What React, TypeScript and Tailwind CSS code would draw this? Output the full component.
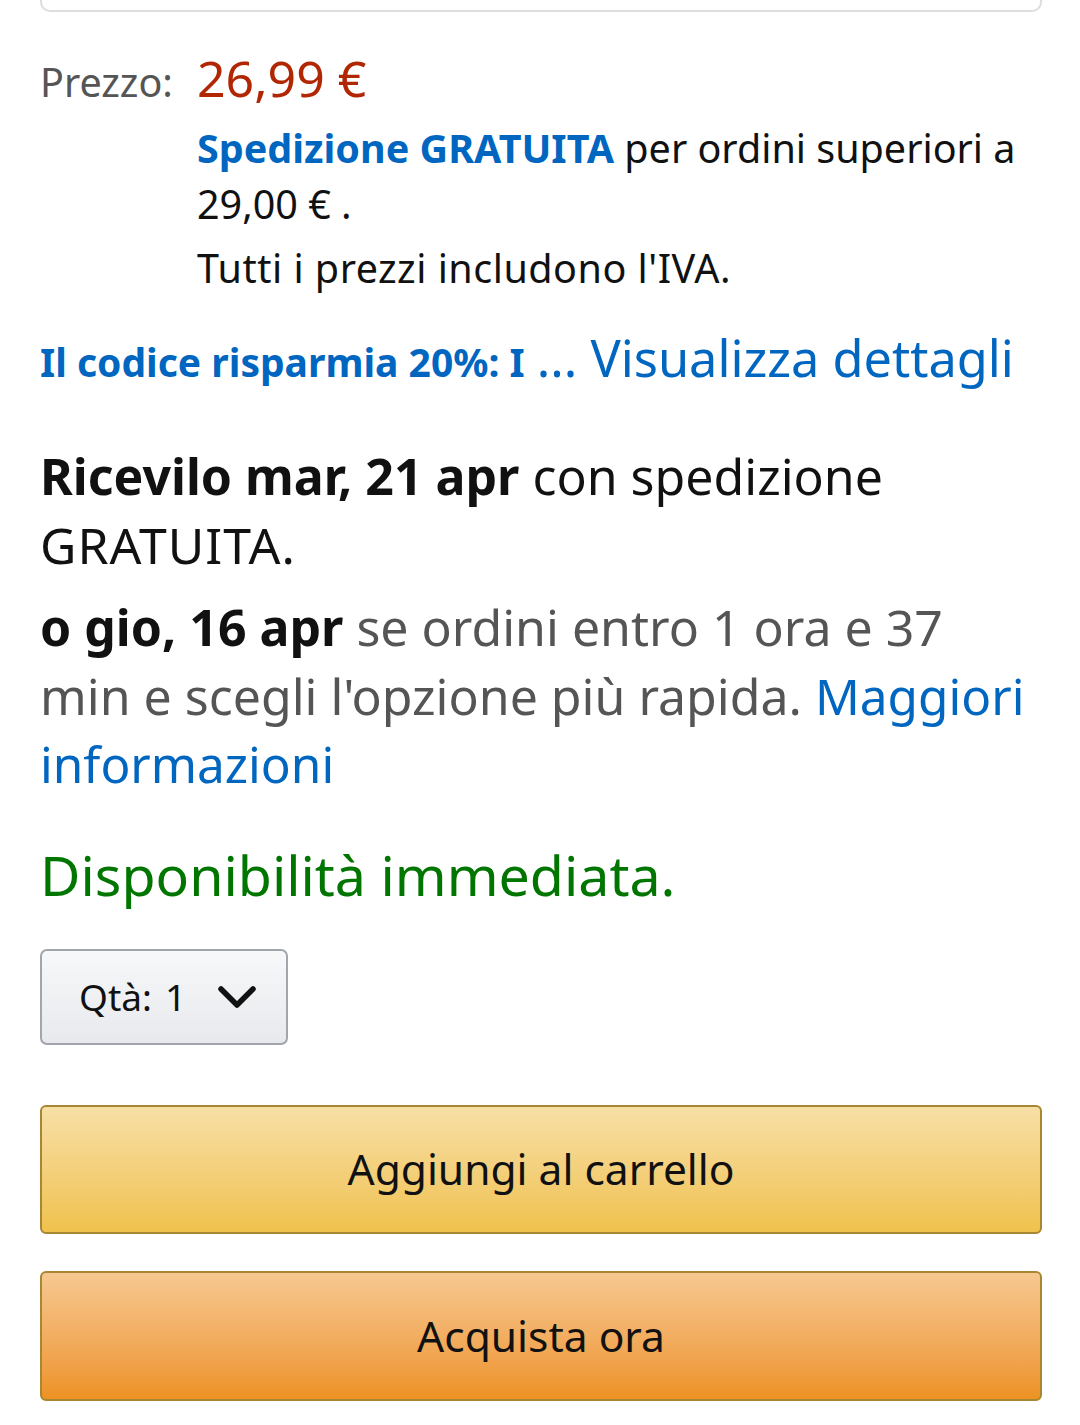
export default function App() {
  return (
    <div
      className="w-[1080px] min-h-[1425px] bg-white overflow-hidden relative"
      style={{ fontFamily: '"Noto Sans", "Open Sans", sans-serif' }}
    >
      <div className="ml-[40px] mr-[38px] -mt-[40px] h-[52px] rounded-b-[10px] border-2 border-t-0 border-[#dddddd]" />

      <div className="pl-[40px] pr-[38px]">
        <div className="flex items-baseline mt-[38px]">
          <span className="w-[157px] text-[39.5px] text-[#555555]">Prezzo:</span>
          <span className="text-[50px] leading-[56px] text-[#B12704]">26,99 €</span>
        </div>

        <div className="pl-[157px] pr-[2px] mt-[8px] text-[39.5px] leading-[56px] text-[#111111]">
          <p>
            <span className="font-bold text-[#0066c0]">Spedizione GRATUITA</span> per ordini superiori a 29,00 € .
          </p>
          <p className="mt-[8px] tracking-[0.5px]">Tutti i prezzi includono l'IVA.</p>
        </div>

        <div className="mt-[24px] flex items-baseline whitespace-nowrap text-[#0066c0]">
          <span className="text-[39px] font-bold">Il codice risparmia 20%: I</span>
          <span className="ml-[12px] text-[50.5px]">... Visualizza dettagli</span>
        </div>

        <div className="mt-[46px] pr-[2px] text-[50px] leading-[68.5px] text-[#111111]">
          <p>
            <span className="font-bold">Ricevilo mar, 21 apr</span> con spedizione <span className="tracking-[1px]">GRATUITA.</span>
          </p>
          <p className="mt-[14px]">
            <span className="font-bold">o gio, 16 apr</span>{" "}
            <span className="text-[#555555]">se ordini entro 1 ora e 37 min e scegli l'opzione più rapida.</span>{" "}
            <span className="text-[#0066c0] text-[49.5px]">Maggiori informazioni</span>
          </p>
        </div>

        <p className="mt-[42px] text-[55.5px] leading-[68px] text-[#007600]">Disponibilità immediata.</p>

        <div className="mt-[40px] flex h-[96px] w-[248px] items-center rounded-[7px] border-2 border-[#a2a6ac] bg-gradient-to-b from-[#f7f8fa] to-[#e7e9ec] pl-[37px] text-[37px] text-[#111111]">
          <span>Qtà:</span>
          <span className="ml-[13px]">1</span>
          <svg className="ml-[31px]" width="40" height="26" viewBox="0 0 40 26" fill="none">
            <path d="M4 5 L20 21 L36 5" stroke="#111" strokeWidth="5.5" strokeLinecap="round" strokeLinejoin="round" />
          </svg>
        </div>

        <button className="mt-[60px] flex h-[129px] w-full items-center justify-center rounded-[6px] border-2 border-[#a88734] bg-gradient-to-b from-[#f7dfa5] to-[#f0c14b] text-[42.5px] text-[#111111]">
          Aggiungi al carrello
        </button>

        <button className="mt-[37px] flex h-[130px] w-full items-center justify-center rounded-[6px] border-2 border-[#a88734] bg-gradient-to-b from-[#f6c88f] to-[#ed9220] text-[42.5px] text-[#111111]">
          Acquista ora
        </button>
      </div>
    </div>
  );
}
